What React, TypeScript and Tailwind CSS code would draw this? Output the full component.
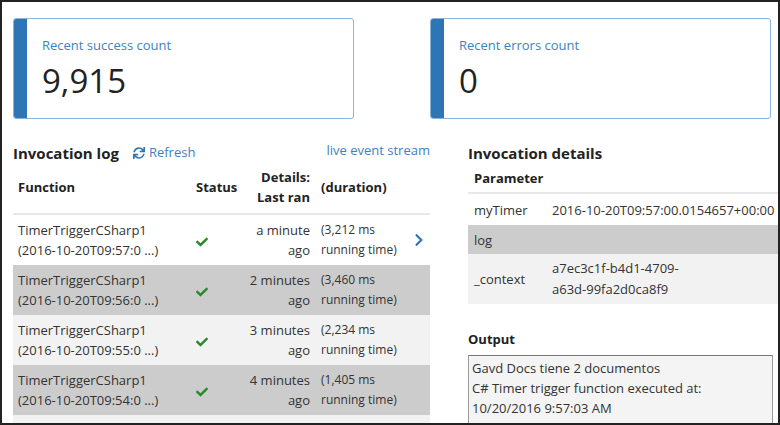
import React from "react";
import { FaCheck, FaChevronRight, FaSync } from "react-icons/fa";

type Invocation = {
  name: string;
  stamp: string;
  ago: string;
  ms: string;
  bg: string;
  arrow?: boolean;
};

const invocations: Invocation[] = [
  { name: "TimerTriggerCSharp1", stamp: "(2016-10-20T09:57:0 ...)", ago: "a minute", ms: "3,212", bg: "bg-white", arrow: true },
  { name: "TimerTriggerCSharp1", stamp: "(2016-10-20T09:56:0 ...)", ago: "2 minutes", ms: "3,460", bg: "bg-[#cccccc]" },
  { name: "TimerTriggerCSharp1", stamp: "(2016-10-20T09:55:0 ...)", ago: "3 minutes", ms: "2,234", bg: "bg-[#f2f2f2]" },
  { name: "TimerTriggerCSharp1", stamp: "(2016-10-20T09:54:0 ...)", ago: "4 minutes", ms: "1,405", bg: "bg-[#cccccc]" },
];

function StatCard({ label, value }: { label: string; value: string }) {
  return (
    <div className="flex h-[101px] w-[341px] shrink-0 overflow-hidden rounded-[3px] border border-[#8ab4dc]">
      <div className="w-[13px] shrink-0 bg-[#2e75b6]" />
      <div className="pl-[15px] pt-[16px]">
        <div className="text-[13px] leading-[20px] text-[#3b82c4]">{label}</div>
        <div className="mt-[6px] text-[33px] leading-[40px] text-[#222]">{value}</div>
      </div>
    </div>
  );
}

export default function App() {
  return (
    <div
      className="relative h-[425px] w-[780px] overflow-hidden border-2 border-[#222] bg-white text-[#333]"
      style={{ fontFamily: '"Segoe UI", "Open Sans", sans-serif' }}
    >
      {/* Stat cards */}
      <div className="flex pl-[11px] pt-[16px]">
        <StatCard label="Recent success count" value="9,915" />
        <div className="ml-[76px]">
          <StatCard label="Recent errors count" value="0" />
        </div>
      </div>

      <div className="flex pl-[11px]">
        {/* Invocation log */}
        <div className="w-[417px] shrink-0">
          <div className="mt-[22px] flex h-[24px] items-center">
            <span className="text-[15px] font-bold text-[#222]">Invocation log</span>
            <span className="ml-[14px] flex items-center gap-[4px] text-[13px] text-[#3b82c4]">
              <FaSync className="h-[12px] w-[12px] text-[#2e75b6]" />
              Refresh
            </span>
            <span className="ml-auto -mt-[4px] text-[13px] text-[#3b82c4]">live event stream</span>
          </div>

          <div className="flex h-[50px] items-center border-b-2 border-[#e8e8e8] pb-[4px] text-[13px] font-bold leading-[20px] text-[#222]">
            <div className="w-[177px] pl-[5px]">Function</div>
            <div className="w-[52px] pl-[6px]">Status</div>
            <div className="w-[68px] text-right">
              Details:
              <br />
              Last ran
            </div>
            <div className="pl-[11px]">(duration)</div>
          </div>

          {invocations.map((inv, i) => (
            <div key={i} className={`flex h-[50px] items-center text-[13px] leading-[20px] ${inv.bg}`}>
              <div className="w-[177px] pl-[5px]">
                <div>{inv.name}</div>
                <div>{inv.stamp}</div>
              </div>
              <div className="w-[52px] pl-[6px] pt-[4px]">
                <FaCheck className="h-[12px] w-[12px] text-[#2a8a2a]" />
              </div>
              <div className="w-[68px] text-right">
                <div>{inv.ago}</div>
                <div>ago</div>
              </div>
              <div className="pl-[11px] text-[12px]">
                <div>({inv.ms} ms</div>
                <div className="whitespace-nowrap">running time)</div>
              </div>
              {inv.arrow && <FaChevronRight className="ml-auto mr-[6px] h-[14px] w-[10px] text-[#2e75b6]" />}
            </div>
          ))}
          <div className="h-[50px] bg-[#f2f2f2]" />
        </div>

        {/* Invocation details */}
        <div className="ml-[38px] w-[400px] shrink-0">
          <div className="mt-[22px] flex h-[24px] items-center text-[15px] font-bold text-[#222]">
            Invocation details
          </div>
          <div className="flex h-[29px] items-center border-b-2 border-[#e8e8e8] pl-[6px] text-[13px] font-bold text-[#222]">
            Parameter
          </div>
          <div className="flex h-[31px] items-center text-[13px] leading-[20px]">
            <div className="w-[84px] pl-[6px]">myTimer</div>
            <div className="whitespace-nowrap">2016-10-20T09:57:00.0154657+00:00</div>
          </div>
          <div className="flex h-[29px] items-center bg-[#cccccc] text-[13px] leading-[20px]">
            <div className="w-[84px] pl-[6px]">log</div>
          </div>
          <div className="flex h-[50px] items-center bg-[#f2f2f2] text-[13px] leading-[21px]">
            <div className="w-[84px] pl-[6px]">_context</div>
            <div>
              <div>a7ec3c1f-b4d1-4709-</div>
              <div>a63d-99fa2d0ca8f9</div>
            </div>
          </div>

          <div className="mt-[25px] text-[13px] font-bold leading-[20px] text-[#222]">Output</div>
          <div className="mt-[6px] h-[80px] w-[305px] border border-[#9a9a9a] border-t-[#777] bg-[#f4f4f4] pl-[3px] pt-[2px] text-[13px] leading-[20px] text-[#333]">
            <div>Gavd Docs tiene 2 documentos</div>
            <div>C# Timer trigger function executed at:</div>
            <div>10/20/2016 9:57:03 AM</div>
          </div>
        </div>
      </div>
    </div>
  );
}
